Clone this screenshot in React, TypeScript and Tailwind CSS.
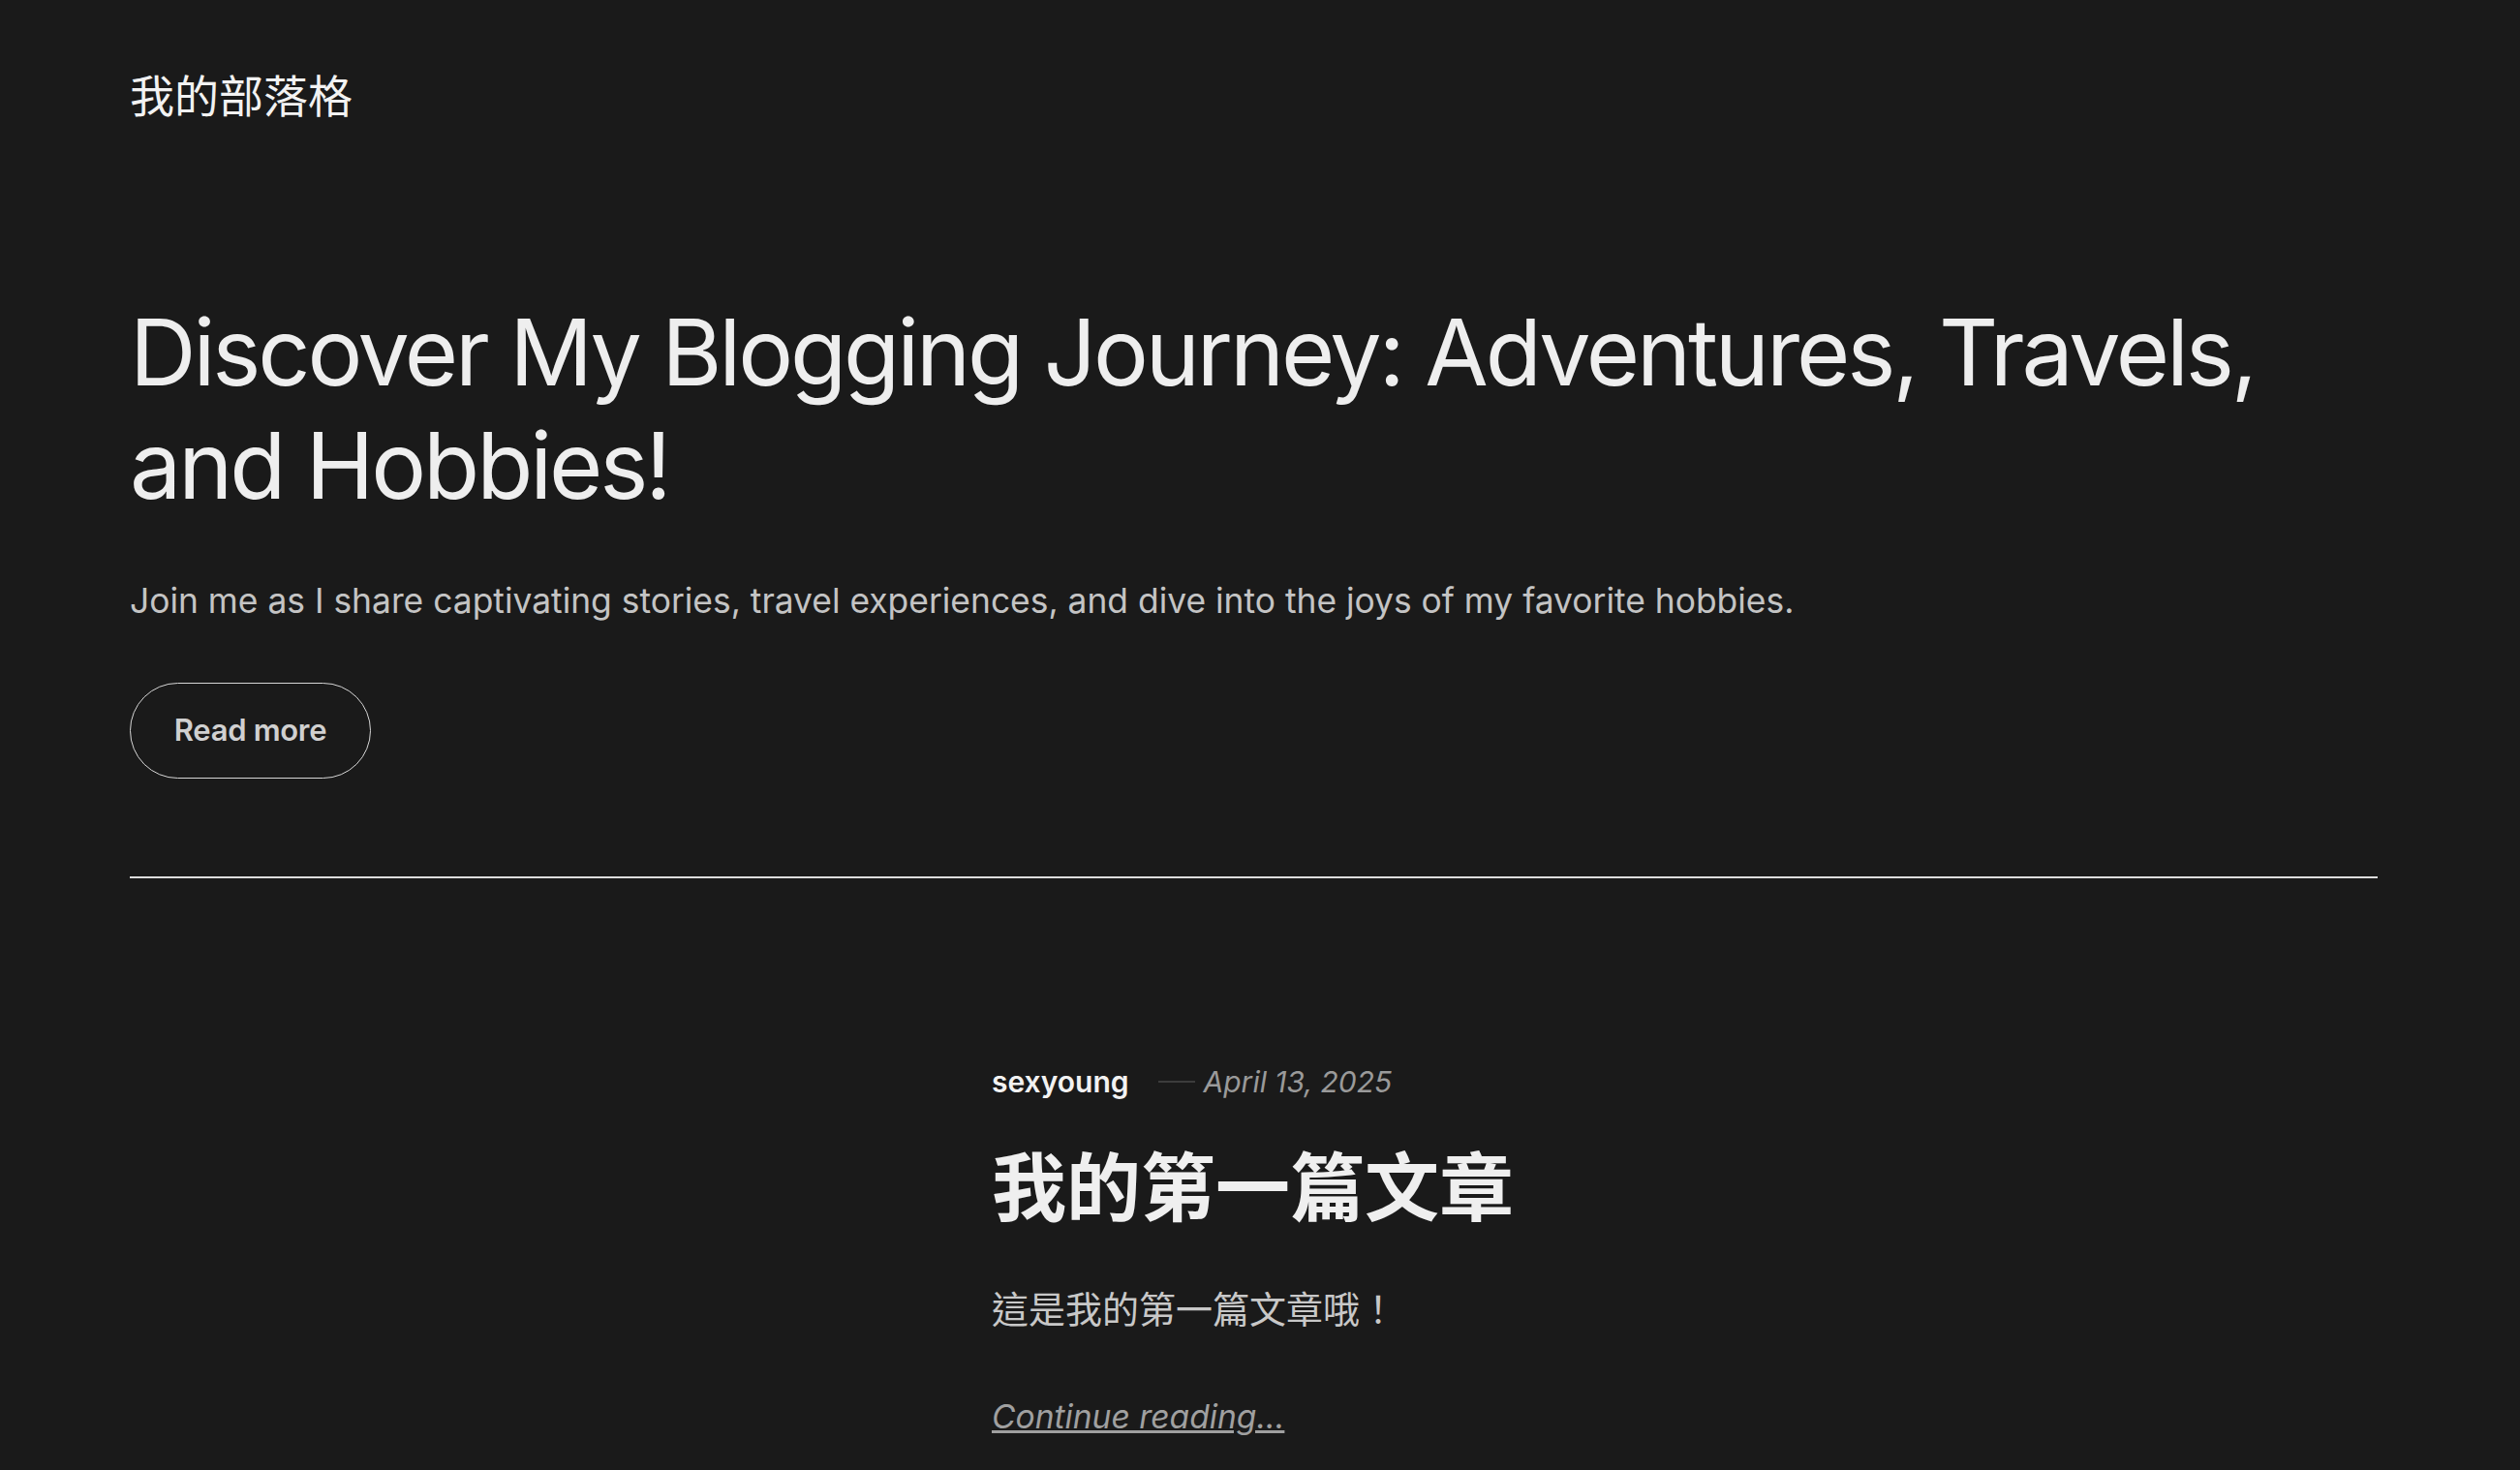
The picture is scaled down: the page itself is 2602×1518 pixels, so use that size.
const App: React.FC = () => {
  return (
    <div className="min-h-screen bg-[#1a1a1a] font-['Inter','Noto_Sans_CJK_TC',sans-serif] text-[#f0f0f0]">
      <header className="pl-[134px] pr-[147px] pt-[72px]">
        <a href="#" className="text-[46px] leading-[54px] text-[#f2f2f2]">
          我的部落格
        </a>
      </header>

      <section className="pl-[134px] pr-[147px] pt-[179px]">
        <h1 className="text-[95px] leading-[117px] font-normal tracking-[-0.033em] text-[#eeeeee]">
          Discover My Blogging Journey: Adventures, Travels,
          <br />
          and Hobbies!
        </h1>
        <p className="mt-[56px] text-[35.4px] leading-[52px] text-[#c4c4c4]">
          Join me as I share captivating stories, travel experiences, and dive into the joys of my favorite hobbies.
        </p>
        <a
          href="#"
          className="mt-[58px] flex h-[99px] w-[249px] items-center justify-center rounded-full border border-[#d6d6d6] text-[31px] font-semibold tracking-[-0.01em] text-[#d0d0d0]"
        >
          Read more
        </a>
        <hr className="mt-[101px] border-0 h-[2px] bg-[#dcdcdc]" />
      </section>

      <main className="flex justify-center pt-[190px] pb-[80px]">
        <article className="w-[554px]">
          <div className="flex items-center text-[30px] leading-[40px]">
            <span className="font-semibold text-[#f2f2f2]">sexyoung</span>
            <span className="ml-[30px] mr-[9px] h-[2px] w-[38px] bg-[#3c3c3c]" />
            <span className="italic text-[#9a9a9a]">April 13, 2025</span>
          </div>
          <h2 className="mt-[44px] text-[77px] leading-[92px] font-bold text-[#efefef]">我的第一篇文章</h2>
          <p className="mt-[51px] text-[38px] leading-[56px] text-[#c8c8c8]">這是我的第一篇文章哦！</p>
          <a href="#" className="mt-[58px] block text-[33.6px] leading-[50px] italic underline text-[#a0a0a0]">
            Continue reading...
          </a>
        </article>
      </main>
    </div>
  );
};

export default App;
